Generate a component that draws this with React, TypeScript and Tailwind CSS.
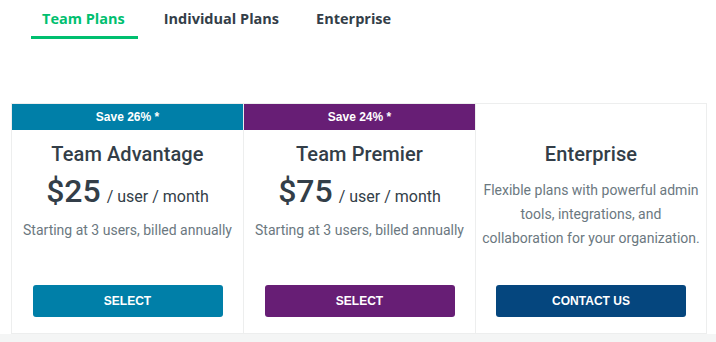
import React from "react";

const plans = [
  {
    banner: "Save 26% *",
    bannerBg: "bg-[#007fa8]",
    title: "Team Advantage",
    price: "$25",
    note: "Starting at 3 users, billed annually",
    button: "SELECT",
    buttonBg: "bg-[#007fa8]",
  },
  {
    banner: "Save 24% *",
    bannerBg: "bg-[#671e75]",
    title: "Team Premier",
    price: "$75",
    note: "Starting at 3 users, billed annually",
    button: "SELECT",
    buttonBg: "bg-[#671e75]",
  },
];

export default function App() {
  return (
    <div className="w-[716px] h-[342px] bg-white overflow-hidden flex flex-col font-['Roboto',sans-serif]">
      <div className="flex pl-[31px] h-[39px] items-end gap-[15px] font-['Open_Sans',sans-serif]">
        <div className="h-[39px] flex flex-col">
          <div className="flex-1 flex items-center pl-[11px] pr-[13px] pt-[1px] text-[14.5px] font-bold text-[#00bf6f]">Team Plans</div>
          <div className="h-[3px] bg-[#00bf6f]" />
        </div>
        <div className="px-[11px] h-[39px] flex items-start pt-[8px] text-[14.5px] font-bold text-[#333e48]">Individual Plans</div>
        <div className="px-[11px] h-[39px] flex items-start pt-[8px] text-[14.5px] font-bold text-[#333e48]">Enterprise</div>
      </div>
      <div className="h-[64px]" />
      <div className="flex pl-[11px]">
        {plans.map((p) => (
          <div key={p.title} className="w-[232px] h-[231px] border-l border-t border-b border-[#edeeee] flex flex-col items-center">
            <div className={`w-full h-[26px] ${p.bannerBg} text-white text-[12px] font-bold flex items-center justify-center font-['Liberation_Sans',sans-serif]`}>
              {p.banner}
            </div>
            <div className="mt-[11px] text-[20px] font-medium tracking-[0.1px] text-[#333e48] leading-[26px]">{p.title}</div>
            <div className="mt-[4px] flex items-baseline text-[#333e48]">
              <span className="text-[32px] font-medium leading-[40px]">{p.price}</span>
              <span className="ml-[6px] text-[16px]">/ user / month</span>
            </div>
            <div className="mt-[9px] text-[14px] text-[#6b787f] leading-[20px]">{p.note}</div>
            <div className="flex-1" />
            <button className={`mb-[16px] w-[190px] h-[32px] rounded-[3px] ${p.buttonBg} text-white text-[12px] font-bold font-['Liberation_Sans',sans-serif]`}>
              {p.button}
            </button>
          </div>
        ))}
        <div className="w-[232px] h-[231px] border border-[#edeeee] flex flex-col items-center">
          <div className="h-[26px]" />
          <div className="mt-[11px] text-[20px] font-medium tracking-[0.1px] text-[#333e48] leading-[26px]">Enterprise</div>
          <div className="mt-[11px] text-[14px] text-[#6b787f] leading-[24px] text-center px-[4px]">
            Flexible plans with powerful admin
            <br />
            tools, integrations, and
            <br />
            collaboration for your organization.
          </div>
          <div className="flex-1" />
          <button className="mb-[16px] w-[190px] h-[32px] rounded-[3px] bg-[#05467e] text-white text-[12px] font-bold font-['Liberation_Sans',sans-serif]">
            CONTACT US
          </button>
        </div>
      </div>
      <div className="flex-1 bg-[#f4f5f5]" />
    </div>
  );
}
